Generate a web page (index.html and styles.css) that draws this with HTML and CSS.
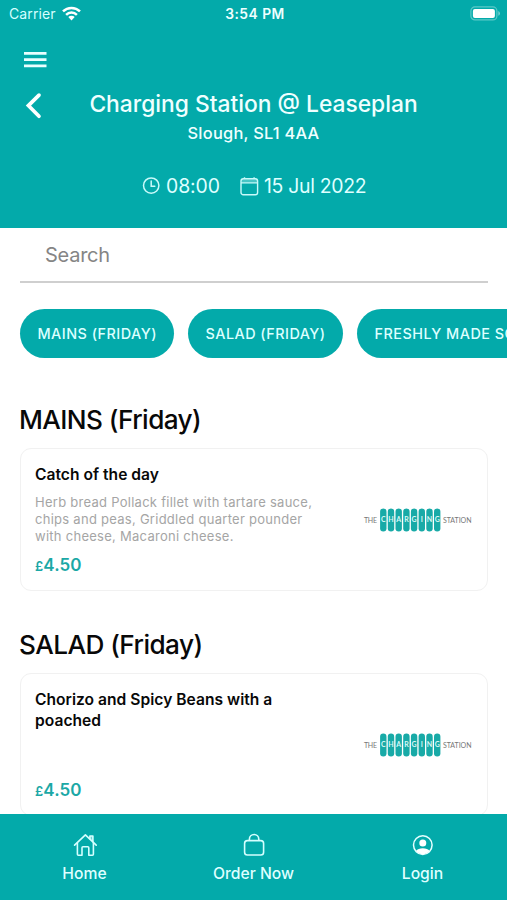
FILE: index.html
```html
<!DOCTYPE html>
<html lang="en">
<head>
<meta charset="utf-8">
<meta name="viewport" content="width=device-width, initial-scale=1">
<title>Charging Station</title>
<link rel="stylesheet" href="styles.css">
</head>
<body>
<svg class="defs" aria-hidden="true">
  <symbol id="brand-logo" viewBox="0 0 110 26">
    <g class="logo-pills">
      <rect x="17.1" y="1.5" width="6.4" height="23" rx="3.2"/>
      <rect x="24.8" y="1.5" width="6.4" height="23" rx="3.2"/>
      <rect x="32.5" y="1.5" width="6.4" height="23" rx="3.2"/>
      <rect x="40.2" y="1.5" width="6.4" height="23" rx="3.2"/>
      <rect x="47.9" y="1.5" width="6.4" height="23" rx="3.2"/>
      <rect x="55.6" y="1.5" width="6.4" height="23" rx="3.2"/>
      <rect x="63.3" y="1.5" width="6.4" height="23" rx="3.2"/>
      <rect x="71" y="1.5" width="6.4" height="23" rx="3.2"/>
    </g>
    <g class="logo-letters">
      <text x="20.3" y="15.4">C</text><text x="28" y="15.4">H</text><text x="35.7" y="15.4">A</text><text x="43.4" y="15.4">R</text><text x="51.1" y="15.4">G</text><text x="58.8" y="15.4">I</text><text x="66.5" y="15.4">N</text><text x="74.2" y="15.4">G</text>
    </g>
    <text class="logo-word" x="1" y="15.6" textLength="13">THE</text>
    <text class="logo-word" x="80" y="15.6" textLength="28.5">STATION</text>
  </symbol>
</svg>
<div class="app">
  <header class="header">
    <div class="status">
      <div class="carrier"><span>Carrier</span>
        <svg width="19" height="15" viewBox="0 0 19 15"><g fill="none" stroke="#fff" stroke-width="2.5"><path d="M1 5.4a12.2 12.2 0 0 1 17 0"/><path d="M4.1 8.8a7.7 7.7 0 0 1 10.8 0"/></g><path d="M9.5 14.4 6.3 11a4.6 4.6 0 0 1 6.4 0z" fill="#fff"/></svg>
      </div>
      <span class="clock">3:54 PM</span>
      <svg class="battery" width="31" height="15" viewBox="0 0 31 15"><rect x=".9" y=".9" width="26" height="13" rx="4" fill="none" stroke="#5cc9c8" stroke-width="1.2"/><rect x="2.9" y="2.9" width="22" height="9" rx="2" fill="#fff"/><path d="M28.4 5v4.8q1.5-.8 1.5-2.4T28.4 5z" fill="#7fd3d2"/></svg>
    </div>
    <svg class="menu" width="24" height="18" viewBox="0 0 24 18"><path d="M1 3.4h22.5M1 9.6h22.5M1 15.8h22.5" stroke="#e9ffff" stroke-width="2.8"/></svg>
    <div class="title-row">
      <svg class="back" width="18" height="28" viewBox="0 0 18 28"><path d="M15 3.1 4.4 13.6 15 24.2" fill="none" stroke="#fff" stroke-width="3.7" stroke-linecap="round" stroke-linejoin="miter"/></svg>
      <div class="heading"><h1>Charging Station @ Leaseplan</h1><p>Slough, SL1 4AA</p></div>
    </div>
    <div class="slot">
      <svg width="18" height="18" viewBox="0 0 18 18"><g fill="none" stroke="#c9fafa" stroke-width="1.5" stroke-linecap="round"><circle cx="9.2" cy="8.6" r="7.7"/><path d="M9.2 4v5.2h3.6"/></g></svg>
      <span class="time">08:00</span>
      <svg class="calendar" width="19" height="19" viewBox="0 0 19 19"><g fill="none" stroke="#c9fafa" stroke-width="1.4"><rect x="1" y="1.7" width="16.6" height="16" rx="2.3"/><path d="M1 5.9h16.6M4.5.3v1.6M14.1.3v1.6"/></g><path d="M1.5 2h15.6v3.6H1.5z" fill="#c9fafa" opacity=".35"/></svg>
      <span class="date">15 Jul 2022</span>
    </div>
  </header>
  <main class="content">
    <div class="search">Search</div>
    <div class="chips">
      <div class="chip mains">MAINS (FRIDAY)</div>
      <div class="chip salad">SALAD (FRIDAY)</div>
      <div class="chip soup">FRESHLY MADE SOUP (FRIDAY)</div>
    </div>
    <section class="section">
      <h2>MAINS (Friday)</h2>
      <article class="card">
        <div class="info">
          <h3>Catch of the day</h3>
          <p class="desc">Herb bread Pollack fillet with tartare sauce,<br>chips and peas, Griddled quarter pounder<br>with cheese, Macaroni cheese.</p>
          <div class="price"><small>£</small>4.50</div>
        </div>
        <svg class="logo" width="110" height="26"><use href="#brand-logo"/></svg>
      </article>
    </section>
    <section class="section">
      <h2>SALAD (Friday)</h2>
      <article class="card">
        <div class="info">
          <h3>Chorizo and Spicy Beans with a<br>poached</h3>
          <div class="price"><small>£</small>4.50</div>
        </div>
        <svg class="logo" width="110" height="26"><use href="#brand-logo"/></svg>
      </article>
    </section>
  </main>
  <nav class="tabs">
    <div class="tab"><svg width="24" height="24" viewBox="0 0 24 24"><g fill="none" stroke="#d5ffff" stroke-width="1.6" stroke-linejoin="round" stroke-linecap="round"><path d="M1.6 12.2 12.4 1.8l10.8 10.4"/><path d="M4.4 10v11.2q0 1 1 1H9v-7.4q0-1 1-1h4.8q1 0 1 1v7.4h3.6q1 0 1-1V10"/><path d="M16.9 5.8V3h3v5.6" fill="#d5ffff" fill-opacity=".5"/></g></svg><span>Home</span></div>
    <div class="tab"><svg width="24" height="24" viewBox="0 0 24 24"><g fill="none" stroke="#d5ffff" stroke-width="1.6"><rect x="2.6" y="7.6" width="19" height="14.4" rx="2.8"/><path d="M7.4 7.4V6.2a4.7 4.7 0 0 1 9.4 0v1.2"/></g></svg><span>Order Now</span></div>
    <div class="tab"><svg width="24" height="24" viewBox="0 0 24 24"><circle cx="11.8" cy="12.1" r="9.3" fill="none" stroke="#e5ffff" stroke-width="1.5"/><circle cx="11.8" cy="10" r="3.5" fill="#fff"/><path d="M4.9 18.1q2.2-2.8 6.9-2.8t6.9 2.8a9.2 9.2 0 0 1-13.8 0z" fill="#fff"/></svg><span>Login</span></div>
  </nav>
</div>
</body>
</html>
```
FILE: styles.css
```css
* { box-sizing: border-box; }
body, h1, h2, h3, p { margin: 0; }
body { font-family: Inter, "Liberation Sans", sans-serif; color: #080808; background: #fff; overflow: hidden; }
svg { display: block; flex: none; }
.defs { display: none; }
.app { width: 507px; height: 900px; display: flex; flex-direction: column; overflow: hidden; white-space: nowrap; }

.header { height: 228px; flex: none; background: #03aaaa; color: #efffff; }
.status { height: 28px; display: grid; grid-template-columns: 1fr auto 1fr; align-items: center; padding: 0 6px 0 9px; font-size: 13.5px; line-height: 20px; }
.carrier { display: flex; align-items: center; gap: 6px; color: #d5ffff; font-size: 14px; letter-spacing: .1px; }
.carrier svg { margin-bottom: 2px; }
.clock { font-weight: 600; font-size: 13.8px; letter-spacing: .5px; }
.battery { justify-self: end; margin-bottom: 2px; }
.menu { margin: 22px 0 0 23px; }
.title-row { display: grid; grid-template-columns: 60px 1fr 60px; margin-top: 22px; }
.back { margin: 2px 0 0 24px; }
.heading { text-align: center; display: flex; flex-direction: column; align-items: center; }
h1 { font-size: 22.8px; line-height: 28px; font-weight: 500; }
.heading p { font-size: 16.4px; line-height: 20px; font-weight: 500; margin-top: 5px; letter-spacing: .25px; }
.slot { display: flex; align-items: center; height: 26px; margin: 30px 0 0 142px; font-size: 19.4px; line-height: 26px; color: #dfffff; }
.time { margin-left: 6px; width: 54px; letter-spacing: -.1px; }
.calendar { margin-left: 20px; }
.date { margin-left: 5px; letter-spacing: -.3px; }

.content { flex: 1; overflow: hidden; padding: 0 19px 0 20px; }
.search { height: 55px; border-bottom: 2px solid #cfcfcf; padding-left: 25px; font-size: 20px; line-height: 55px; color: #858585; letter-spacing: -.25px; }
.chips { display: flex; gap: 14px; margin-top: 26px; }
.chip { height: 49px; flex: none; border-radius: 25px; background: #03aaaa; color: #dcffff; font-size: 14.4px; line-height: 49px; font-weight: 500; padding-left: 17.5px; letter-spacing: .48px; }
.mains { width: 154px; }
.salad { width: 155px; }
.soup { width: 260px; }
.section h2 { font-size: 26.2px; line-height: 34px; font-weight: 500; margin: 45px 0 0 -1px; letter-spacing: -.58px; }
.section + .section h2 { margin-top: 37px; }
.card { height: 143px; border: 1.5px solid #f1f1f1; border-radius: 11px; margin-top: 11px; padding: 15px 14px 13px; display: flex; justify-content: space-between; align-items: center; }
.info { align-self: stretch; display: flex; flex-direction: column; }
.logo { margin-top: -2px; }
h3 { font-size: 15.6px; line-height: 21px; font-weight: 600; letter-spacing: .02px; }
.desc { font-size: 13px; line-height: 17px; color: #a5a5a5; margin-top: 9px; letter-spacing: .27px; }
.price { color: #1ba8a6; font-weight: 600; font-size: 17px; line-height: 22px; margin-top: auto; letter-spacing: .1px; }
.price small { font-size: 13px; }
.logo-pills { fill: #18aaa7; }
.logo-letters { fill: #d8f8f6; font: 700 7px Lato, sans-serif; text-anchor: middle; }
.logo-word { fill: #777; font: 400 7px Lato, sans-serif; }

.tabs { height: 86px; flex: none; background: #03aaaa; display: grid; grid-template-columns: repeat(3, 1fr); color: #dfffff; }
.tab { display: flex; flex-direction: column; align-items: center; padding-top: 19px; font-size: 15.7px; line-height: 20px; font-weight: 500; gap: 7px; }
```
